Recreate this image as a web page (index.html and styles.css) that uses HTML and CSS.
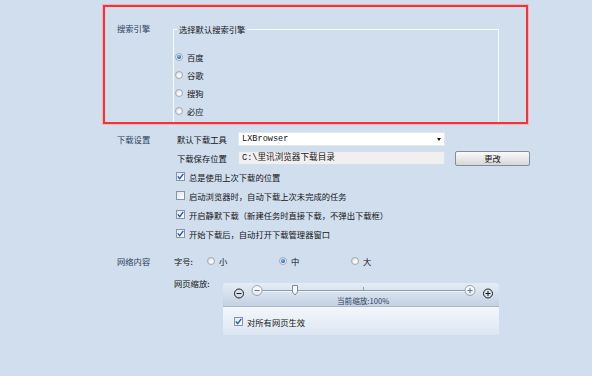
FILE: index.html
```html
<!DOCTYPE html>
<html lang="zh-CN">
<head>
<meta charset="utf-8">
<title>设置</title>
<link rel="stylesheet" href="styles.css">
</head>
<body>
<div class="page">
  <div class="highlight">
    <div class="sec-label engine-label">搜索引擎</div>
    <fieldset class="engine">
      <legend>选择默认搜索引擎</legend>
      <div class="opt first"><span class="radio on"></span><span>百度</span></div>
      <div class="opt"><span class="radio"></span><span>谷歌</span></div>
      <div class="opt"><span class="radio"></span><span>搜狗</span></div>
      <div class="opt"><span class="radio"></span><span>必应</span></div>
    </fieldset>
  </div>

  <section class="sec download">
    <div class="sec-label dl-label">下载设置</div>
    <div class="sec-body">
      <div class="row">
        <span class="field-label">默认下载工具</span>
        <div class="select"><span class="mono">LXBrowser</span><span class="caret"></span></div>
      </div>
      <div class="row row2">
        <span class="field-label">下载保存位置</span>
        <div class="path"><span class="mono">C:\里讯浏览器下载目录</span></div>
        <button class="btn">更改</button>
      </div>
      <div class="checks">
        <div class="check-row"><span class="cb"><svg viewBox="0 0 9 9" width="9" height="9"><path d="M1.8 4.4 L3.7 6.6 L7.3 1.8" fill="none" stroke="#2550ad" stroke-width="1.3"/></svg></span><span>总是使用上次下载的位置</span></div>
        <div class="check-row"><span class="cb"></span><span>启动浏览器时，自动下载上次未完成的任务</span></div>
        <div class="check-row"><span class="cb"><svg viewBox="0 0 9 9" width="9" height="9"><path d="M1.8 4.4 L3.7 6.6 L7.3 1.8" fill="none" stroke="#2550ad" stroke-width="1.3"/></svg></span><span>开启静默下载（新建任务时直接下载，不弹出下载框）</span></div>
        <div class="check-row"><span class="cb"><svg viewBox="0 0 9 9" width="9" height="9"><path d="M1.8 4.4 L3.7 6.6 L7.3 1.8" fill="none" stroke="#2550ad" stroke-width="1.3"/></svg></span><span>开始下载后，自动打开下载管理器窗口</span></div>
      </div>
    </div>
  </section>

  <section class="sec network">
    <div class="sec-label net-label">网络内容</div>
    <div class="sec-body">
      <div class="row font-row">
        <span class="fs-label">字号:</span>
        <div class="fs-opt"><span class="radio"></span><span>小</span></div>
        <div class="fs-opt"><span class="radio on"></span><span>中</span></div>
        <div class="fs-opt"><span class="radio"></span><span>大</span></div>
      </div>
      <div class="zoom-row">
        <span class="zoom-label">网页缩放:</span>
        <div class="zoom-panel">
          <div class="zoom-head">
            <svg width="276" height="24" viewBox="0 0 276 24">
              <defs>
                <linearGradient id="btnfill" x1="0" y1="0" x2="0" y2="1">
                  <stop offset="0" stop-color="#ffffff"/>
                  <stop offset="1" stop-color="#dfe6ef"/>
                </linearGradient>
              </defs>
              <circle cx="16" cy="10.5" r="4.5" fill="none" stroke="#1d1d1d" stroke-width="1"/>
              <line x1="13.5" y1="10.5" x2="18.5" y2="10.5" stroke="#1d1d1d" stroke-width="1"/>
              <line x1="39" y1="7.5" x2="242" y2="7.5" stroke="#8a9ab0" stroke-width="1"/>
              <line x1="39" y1="8.5" x2="242" y2="8.5" stroke="#eef3f9" stroke-width="1"/>
              <line x1="140.5" y1="4" x2="140.5" y2="7.5" stroke="#8a9ab0" stroke-width="1"/>
              <circle cx="34" cy="7.5" r="5" fill="url(#btnfill)" stroke="#98a4b4" stroke-width="1"/>
              <line x1="31.5" y1="7.5" x2="36.5" y2="7.5" stroke="#6d7480" stroke-width="1"/>
              <circle cx="247" cy="7.5" r="5" fill="url(#btnfill)" stroke="#98a4b4" stroke-width="1"/>
              <line x1="244.5" y1="7.5" x2="249.5" y2="7.5" stroke="#6d7480" stroke-width="1"/>
              <line x1="247" y1="5" x2="247" y2="10" stroke="#6d7480" stroke-width="1"/>
              <path d="M69.5 2.5 h5 v6.5 l-2.5 3 l-2.5 -3 z" fill="#f6f8fb" stroke="#7f8c9e" stroke-width="1"/>
              <circle cx="265" cy="10.5" r="4.5" fill="none" stroke="#1d1d1d" stroke-width="1"/>
              <line x1="262.5" y1="10.5" x2="267.5" y2="10.5" stroke="#1d1d1d" stroke-width="1"/>
              <line x1="265" y1="8" x2="265" y2="13" stroke="#1d1d1d" stroke-width="1"/>
              <text x="114" y="20.5" class="zoom-text">当前缩放:100%</text>
            </svg>
          </div>
          <div class="zoom-body">
            <div class="check-row apply"><span class="cb"><svg viewBox="0 0 9 9" width="9" height="9"><path d="M1.8 4.4 L3.7 6.6 L7.3 1.8" fill="none" stroke="#2550ad" stroke-width="1.3"/></svg></span><span>对所有网页生效</span></div>
          </div>
        </div>
      </div>
    </div>
  </section>
</div>
</body>
</html>
```

FILE: styles.css
```css
html, body {
  margin: 0;
  padding: 0;
  background: #d0deee;
}

body {
  font-family: "Noto Sans CJK SC", "Noto Sans", sans-serif;
  font-size: 8.3px;
  line-height: 12px;
  color: #141414;
  width: 592px;
  height: 376px;
  overflow: hidden;
}

.page {
  display: flex;
  flex-direction: column;
}

/* ---------- highlighted search engine block ---------- */
.highlight {
  box-sizing: border-box;
  margin: 5px 0 0 103px;
  width: 425px;
  height: 119px;
  border: 2px solid #ff2f2f;
  box-shadow: 0 0 0 1px rgba(255, 140, 140, 0.45);
  padding-left: 12px;
  display: flex;
  align-items: flex-start;
  overflow: hidden;
}

.sec-label {
  color: #2f3f5c;
  flex: none;
}

.engine-label {
  width: 56px;
  margin-top: 15px;
}

.engine {
  margin: 16px 0 0 0;
  padding: 13px 0 3px 1px;
  width: 326px;
  box-sizing: border-box;
  border: 1px solid #f7faff;
  min-width: 0;
}

.engine legend {
  padding: 0 2px;
  margin-left: 2px;
  line-height: 12px;
}

.opt {
  display: flex;
  align-items: center;
  height: 18px;
  gap: 4px;
}

/* ---------- radio ---------- */
.radio {
  flex: none;
  box-sizing: border-box;
  width: 8px;
  height: 8px;
  border-radius: 50%;
  border: 1px solid #a4abb4;
  background: radial-gradient(circle at 60% 65%, #ffffff 0, #f3f3f3 35%, #cfd2d6 100%);
  display: flex;
  align-items: center;
  justify-content: center;
}

.radio.on::after {
  content: "";
  width: 4px;
  height: 4px;
  border-radius: 50%;
  background: radial-gradient(circle at 40% 35%, #7cc2ff 0, #1a6cc4 60%, #0b4a94 100%);
}

/* ---------- sections ---------- */
.sec {
  display: flex;
  align-items: flex-start;
  padding-left: 117px;
}

.download {
  margin-top: 7px;
}

.dl-label {
  width: 60px;
  line-height: 16px;
}

.sec-body {
  display: flex;
  flex-direction: column;
}

.row {
  display: flex;
  align-items: center;
  height: 16px;
}

.row2 {
  margin-top: 3px;
}

.field-label {
  width: 61px;
  flex: none;
}

.mono {
  font-family: "Liberation Mono", "Noto Sans CJK SC", monospace;
  font-size: 8.6px;
  white-space: nowrap;
}

.select,
.path {
  box-sizing: border-box;
  width: 207px;
  height: 14px;
  display: flex;
  align-items: center;
  padding-left: 3px;
}

.select {
  background: #ffffff;
  border: 1px solid #e2e8f0;
  justify-content: space-between;
  padding-right: 3px;
}

.caret {
  width: 0;
  height: 0;
  border-left: 2.5px solid transparent;
  border-right: 2.5px solid transparent;
  border-top: 3px solid #111;
}

.path {
  background: #f0f0f0;
  border: 1px solid #d9dfe7;
}

.btn {
  box-sizing: border-box;
  margin-left: 10px;
  width: 75px;
  height: 15px;
  padding: 0;
  border: 1px solid #858c96;
  border-radius: 2px;
  background: linear-gradient(#fafafa, #e9e9e9 50%, #d6d6d6);
  font: inherit;
  line-height: 12px;
  color: #141414;
}

.checks {
  margin-top: 1px;
  margin-left: -1px;
  display: flex;
  flex-direction: column;
}

.check-row {
  display: flex;
  align-items: center;
  gap: 4px;
  height: 19px;
}

/* ---------- checkbox ---------- */
.cb {
  flex: none;
  box-sizing: border-box;
  width: 9px;
  height: 9px;
  border: 1px solid #8494a9;
  background: linear-gradient(135deg, #dfe6ee, #ffffff);
  display: flex;
}

.cb svg {
  display: block;
  margin: -1px;
}

/* ---------- network ---------- */
.network {
  margin-top: 10px;
}

.net-label {
  width: 57px;
  line-height: 16px;
}

.fs-label {
  width: 33px;
  flex: none;
}

.fs-opt {
  width: 72px;
  display: flex;
  align-items: center;
  gap: 4px;
}

.zoom-row {
  margin-top: 8px;
  display: flex;
  align-items: flex-start;
}

.zoom-label {
  width: 49px;
  flex: none;
}

.zoom-panel {
  margin-top: 6px;
  width: 276px;
  display: flex;
  flex-direction: column;
}

.zoom-head {
  height: 24px;
  box-sizing: border-box;
  border-radius: 3px 3px 0 0;
  background: linear-gradient(#e4ecf5, #d3deeb 55%, #c3d1e3);
  border-bottom: 1px solid #a6b7cd;
}

.zoom-head svg {
  display: block;
}

.zoom-text {
  font-family: "Noto Sans CJK SC", "Noto Sans", sans-serif;
  font-size: 7.6px;
  fill: #2f4262;
}

.zoom-body {
  height: 28px;
  box-sizing: border-box;
  padding: 1px 0 0 11px;
  background: linear-gradient(#f3f7fc, #e6edf6 60%, #dbe5f1);
  display: flex;
  align-items: center;
}

.apply {
  gap: 4px;
}
```
